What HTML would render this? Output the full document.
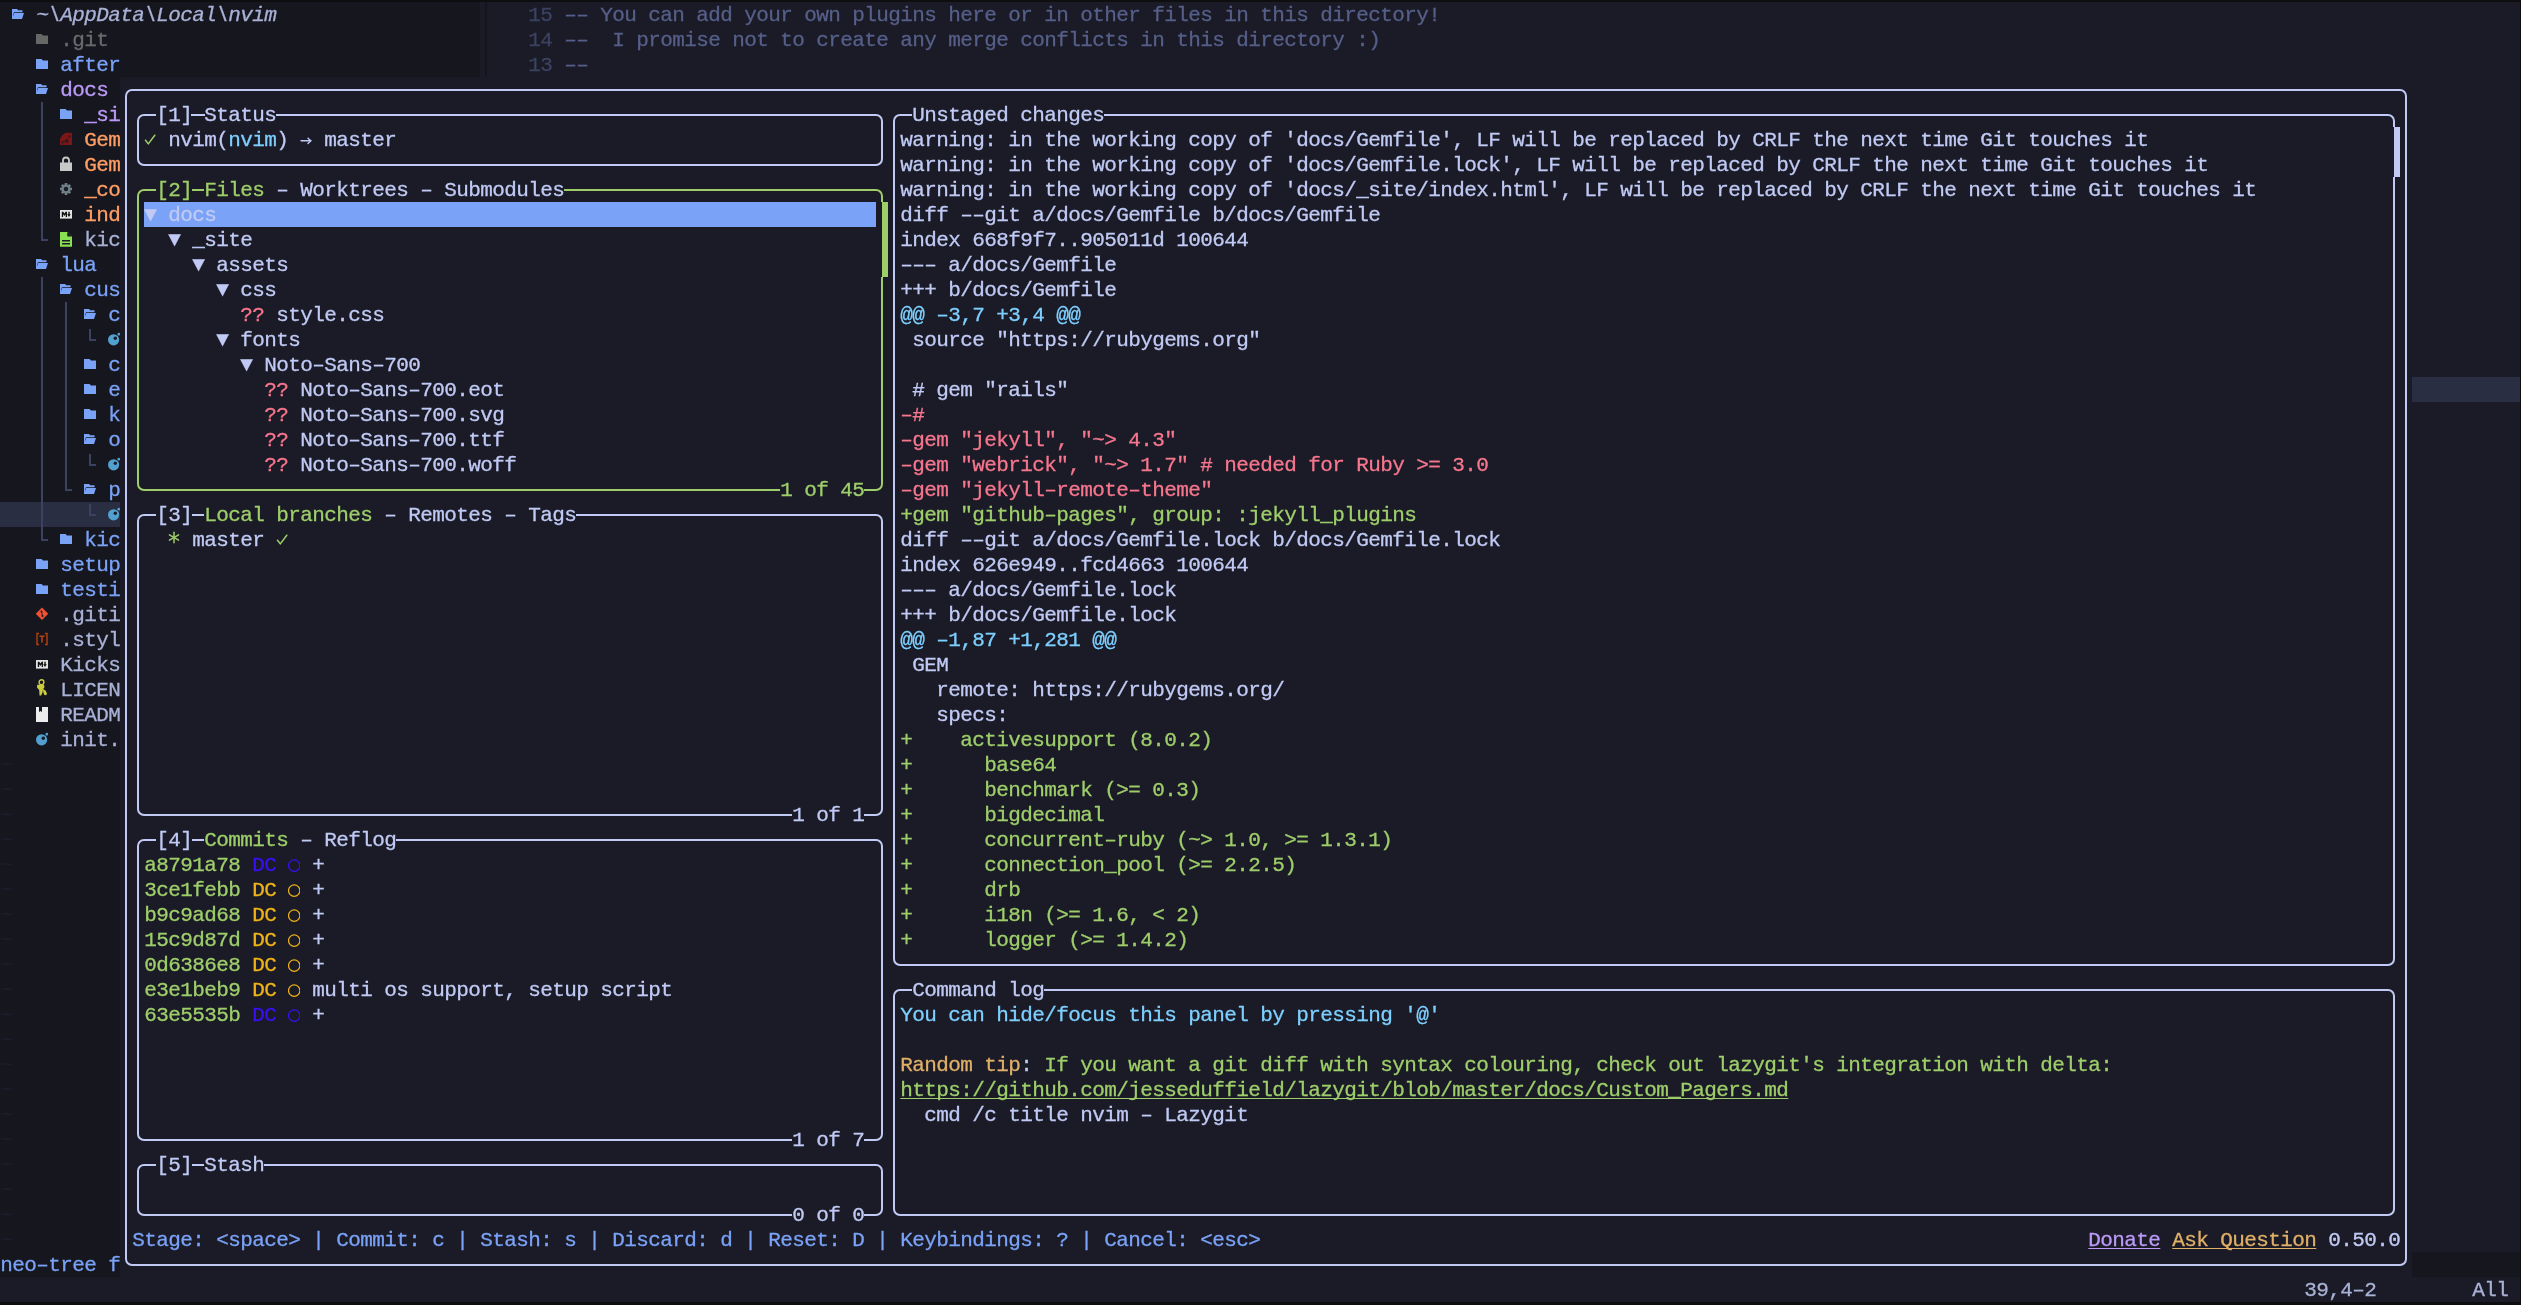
<!DOCTYPE html>
<html><head><meta charset="utf-8"><style>
html,body{margin:0;padding:0;}
body{width:2521px;height:1305px;overflow:hidden;background:#0e0e10;position:relative;}
.t{position:absolute;height:25px;line-height:25px;white-space:pre;font-family:"Liberation Mono",monospace;font-size:21px;letter-spacing:-0.6021px;-webkit-text-stroke:0.3px currentColor;}
#wrap{position:absolute;left:0;top:0;width:2521px;height:1305px;will-change:transform;}
.r{position:absolute;}
.b{position:absolute;box-sizing:border-box;border:2px solid;border-radius:7px;}
</style></head><body><div id="wrap">
<div class="r" style="left:0px;top:2px;width:2520px;height:1300px;background:#1a1b26;"></div>
<div class="r" style="left:0px;top:2px;width:480px;height:1250px;background:#16161e;"></div>
<div class="r" style="left:0px;top:1252px;width:2520px;height:25px;background:#16161e;"></div>
<div class="r" style="left:0px;top:502px;width:120px;height:25px;background:#292e42;"></div>
<div class="r" style="left:485px;top:2px;width:2px;height:1250px;background:#14141b;"></div>
<div class="t" style="left:36.3px;top:3px;color:#a9b1d6;font-style:italic;">~\AppData\Local\nvim</div>
<div class="t" style="left:60.3px;top:28px;color:#6b6b6b;">.git</div>
<div class="t" style="left:60.3px;top:53px;color:#7aa2f7;">after</div>
<div class="t" style="left:60.3px;top:78px;color:#bb9af7;">docs</div>
<div class="t" style="left:84.3px;top:103px;color:#bb9af7;">_si</div>
<div class="t" style="left:84.3px;top:128px;color:#ff9e64;">Gem</div>
<div class="t" style="left:84.3px;top:153px;color:#ff9e64;">Gem</div>
<div class="t" style="left:84.3px;top:178px;color:#ff9e64;">_co</div>
<div class="t" style="left:84.3px;top:203px;color:#ff9e64;">ind</div>
<div class="t" style="left:84.3px;top:228px;color:#a9b1d6;">kic</div>
<div class="t" style="left:60.3px;top:253px;color:#7aa2f7;">lua</div>
<div class="t" style="left:84.3px;top:278px;color:#7aa2f7;">cus</div>
<div class="t" style="left:108.3px;top:303px;color:#7aa2f7;">c</div>
<div class="t" style="left:108.3px;top:353px;color:#7aa2f7;">c</div>
<div class="t" style="left:108.3px;top:378px;color:#7aa2f7;">e</div>
<div class="t" style="left:108.3px;top:403px;color:#7aa2f7;">k</div>
<div class="t" style="left:108.3px;top:428px;color:#7aa2f7;">o</div>
<div class="t" style="left:108.3px;top:478px;color:#7aa2f7;">p</div>
<div class="t" style="left:84.3px;top:528px;color:#7aa2f7;">kic</div>
<div class="t" style="left:60.3px;top:553px;color:#7aa2f7;">setup</div>
<div class="t" style="left:60.3px;top:578px;color:#7aa2f7;">testi</div>
<div class="t" style="left:60.3px;top:603px;color:#a9b1d6;">.giti</div>
<div class="t" style="left:60.3px;top:628px;color:#a9b1d6;">.styl</div>
<div class="t" style="left:60.3px;top:653px;color:#a9b1d6;">Kicks</div>
<div class="t" style="left:60.3px;top:678px;color:#a9b1d6;">LICEN</div>
<div class="t" style="left:60.3px;top:703px;color:#a9b1d6;">READM</div>
<div class="t" style="left:60.3px;top:728px;color:#a9b1d6;">init.</div>
<svg class="r" style="left:12px;top:2px" width="12" height="25" viewBox="0 0 12 25"><path d="M0 7 H5 L6.2 8.2 H10.5 V10.2 H2 L1.2 12.5 V17 H0 Z" fill="#7aa2f7"/><path d="M2.2 11 H12 L10 17 H0 Z" fill="#7aa2f7"/></svg>
<svg class="r" style="left:36px;top:27px" width="12" height="25" viewBox="0 0 12 25"><path d="M0 7 H5.5 L7 8.5 H12 V17 H0 Z" fill="#676767"/></svg>
<svg class="r" style="left:36px;top:52px" width="12" height="25" viewBox="0 0 12 25"><path d="M0 7 H5.5 L7 8.5 H12 V17 H0 Z" fill="#7aa2f7"/></svg>
<svg class="r" style="left:36px;top:77px" width="12" height="25" viewBox="0 0 12 25"><path d="M0 7 H5 L6.2 8.2 H10.5 V10.2 H2 L1.2 12.5 V17 H0 Z" fill="#7aa2f7"/><path d="M2.2 11 H12 L10 17 H0 Z" fill="#7aa2f7"/></svg>
<svg class="r" style="left:60px;top:102px" width="12" height="25" viewBox="0 0 12 25"><path d="M0 7 H5.5 L7 8.5 H12 V17 H0 Z" fill="#7aa2f7"/></svg>
<svg class="r" style="left:60px;top:127px" width="12" height="25" viewBox="0 0 12 25"><path d="M5.8 5.8 H11.3 L12 6.6 V17.3 L11.3 18.1 H0.6 L0 17.3 V12 Q1.2 8.2 5.8 5.8 Z" fill="#7d1717"/><path d="M9.5 7.6 L8 10.3 L11 10.3 Z" fill="#1a1b26" opacity="0.85"/><path d="M1 14.7 L3.2 17.2 L3.8 14 Z" fill="#1a1b26" opacity="0.85"/><path d="M3.6 14.2 L7.8 11.2 L8.6 15.6 L7.4 16.2 Z" fill="#1a1b26" opacity="0.75"/></svg>
<svg class="r" style="left:60px;top:152px" width="12" height="25" viewBox="0 0 12 25"><path d="M3 11 V8.5 A3 3 0 0 1 9 8.5 V11" stroke="#c8c8c8" stroke-width="1.8" fill="none"/><rect x="0" y="10.5" width="12" height="8.5" fill="#c8c8c8"/></svg>
<svg class="r" style="left:60px;top:177px" width="12" height="25" viewBox="0 0 12 25"><circle cx="6" cy="12" r="4.6" fill="#6d8086"/><g stroke="#6d8086" stroke-width="2.6"><path d="M6 6 V18"/><path d="M0 12 H12"/><path d="M1.8 7.8 L10.2 16.2"/><path d="M10.2 7.8 L1.8 16.2"/></g><circle cx="6" cy="12" r="2.2" fill="#1a1b26"/></svg>
<svg class="r" style="left:60px;top:202px" width="12" height="25" viewBox="0 0 12 25"><rect x="0" y="8" width="12" height="8.6" fill="#e2e2e2"/><path d="M1.8 15 V9.8 H3.2 L4.4 11.6 L5.6 9.8 H7 V15 H5.7 V12.3 L4.4 14 L3.1 12.3 V15 Z" fill="#111"/><path d="M8.3 9.8 H9.7 V12.3 H10.8 L9 14.9 L7.2 12.3 H8.3 Z" fill="#111"/></svg>
<svg class="r" style="left:60px;top:227px" width="12" height="25" viewBox="0 0 12 25"><path d="M0 5 H7.5 L12 9.5 V19.7 H0 Z" fill="#89e051"/><path d="M7.5 5 V9.5 H12" fill="#1a1b26"/><path d="M7.5 5.6 V9 H11" fill="#1a1b26"/><rect x="2" y="13" width="8" height="1.5" fill="#1a1b26"/><rect x="2" y="16" width="8" height="1.5" fill="#1a1b26"/></svg>
<svg class="r" style="left:36px;top:252px" width="12" height="25" viewBox="0 0 12 25"><path d="M0 7 H5 L6.2 8.2 H10.5 V10.2 H2 L1.2 12.5 V17 H0 Z" fill="#7aa2f7"/><path d="M2.2 11 H12 L10 17 H0 Z" fill="#7aa2f7"/></svg>
<svg class="r" style="left:60px;top:277px" width="12" height="25" viewBox="0 0 12 25"><path d="M0 7 H5 L6.2 8.2 H10.5 V10.2 H2 L1.2 12.5 V17 H0 Z" fill="#7aa2f7"/><path d="M2.2 11 H12 L10 17 H0 Z" fill="#7aa2f7"/></svg>
<svg class="r" style="left:84px;top:302px" width="12" height="25" viewBox="0 0 12 25"><path d="M0 7 H5 L6.2 8.2 H10.5 V10.2 H2 L1.2 12.5 V17 H0 Z" fill="#7aa2f7"/><path d="M2.2 11 H12 L10 17 H0 Z" fill="#7aa2f7"/></svg>
<svg class="r" style="left:108px;top:327px" width="12" height="25" viewBox="0 0 12 25"><circle cx="5.6" cy="12.8" r="5.6" fill="#51a0cf"/><circle cx="7.3" cy="11.2" r="1.7" fill="#1a1b26"/><circle cx="10.8" cy="7.2" r="1.4" fill="#51a0cf"/></svg>
<svg class="r" style="left:84px;top:352px" width="12" height="25" viewBox="0 0 12 25"><path d="M0 7 H5.5 L7 8.5 H12 V17 H0 Z" fill="#7aa2f7"/></svg>
<svg class="r" style="left:84px;top:377px" width="12" height="25" viewBox="0 0 12 25"><path d="M0 7 H5.5 L7 8.5 H12 V17 H0 Z" fill="#7aa2f7"/></svg>
<svg class="r" style="left:84px;top:402px" width="12" height="25" viewBox="0 0 12 25"><path d="M0 7 H5.5 L7 8.5 H12 V17 H0 Z" fill="#7aa2f7"/></svg>
<svg class="r" style="left:84px;top:427px" width="12" height="25" viewBox="0 0 12 25"><path d="M0 7 H5 L6.2 8.2 H10.5 V10.2 H2 L1.2 12.5 V17 H0 Z" fill="#7aa2f7"/><path d="M2.2 11 H12 L10 17 H0 Z" fill="#7aa2f7"/></svg>
<svg class="r" style="left:108px;top:452px" width="12" height="25" viewBox="0 0 12 25"><circle cx="5.6" cy="12.8" r="5.6" fill="#51a0cf"/><circle cx="7.3" cy="11.2" r="1.7" fill="#1a1b26"/><circle cx="10.8" cy="7.2" r="1.4" fill="#51a0cf"/></svg>
<svg class="r" style="left:84px;top:477px" width="12" height="25" viewBox="0 0 12 25"><path d="M0 7 H5 L6.2 8.2 H10.5 V10.2 H2 L1.2 12.5 V17 H0 Z" fill="#7aa2f7"/><path d="M2.2 11 H12 L10 17 H0 Z" fill="#7aa2f7"/></svg>
<svg class="r" style="left:108px;top:502px" width="12" height="25" viewBox="0 0 12 25"><circle cx="5.6" cy="12.8" r="5.6" fill="#51a0cf"/><circle cx="7.3" cy="11.2" r="1.7" fill="#1a1b26"/><circle cx="10.8" cy="7.2" r="1.4" fill="#51a0cf"/></svg>
<svg class="r" style="left:60px;top:527px" width="12" height="25" viewBox="0 0 12 25"><path d="M0 7 H5.5 L7 8.5 H12 V17 H0 Z" fill="#7aa2f7"/></svg>
<svg class="r" style="left:36px;top:552px" width="12" height="25" viewBox="0 0 12 25"><path d="M0 7 H5.5 L7 8.5 H12 V17 H0 Z" fill="#7aa2f7"/></svg>
<svg class="r" style="left:36px;top:577px" width="12" height="25" viewBox="0 0 12 25"><path d="M0 7 H5.5 L7 8.5 H12 V17 H0 Z" fill="#7aa2f7"/></svg>
<svg class="r" style="left:36px;top:602px" width="12" height="25" viewBox="0 0 12 25"><path d="M6 5.5 L12.3 11.8 L6 18.1 L-0.3 11.8 Z" fill="#f05133"/><circle cx="5.5" cy="9.5" r="1" fill="#1a1b26"/><circle cx="6.5" cy="14" r="1" fill="#1a1b26"/><path d="M5.5 9.5 L6.5 14" stroke="#1a1b26" stroke-width="0.9"/></svg>
<svg class="r" style="left:36px;top:627px" width="12" height="25" viewBox="0 0 12 25"><path d="M3 6.5 H1 V17.5 H3 M9 6.5 H11 V17.5 H9" stroke="#b7410e" stroke-width="1.4" fill="none"/><path d="M3.5 9.2 H8.5 M6 9.2 V15.5" stroke="#b7410e" stroke-width="1.6" fill="none"/></svg>
<svg class="r" style="left:36px;top:652px" width="12" height="25" viewBox="0 0 12 25"><rect x="0" y="8" width="12" height="8.6" fill="#e2e2e2"/><path d="M1.8 15 V9.8 H3.2 L4.4 11.6 L5.6 9.8 H7 V15 H5.7 V12.3 L4.4 14 L3.1 12.3 V15 Z" fill="#111"/><path d="M8.3 9.8 H9.7 V12.3 H10.8 L9 14.9 L7.2 12.3 H8.3 Z" fill="#111"/></svg>
<svg class="r" style="left:36px;top:677px" width="12" height="25" viewBox="0 0 12 25"><circle cx="5.5" cy="5.2" r="2.4" stroke="#cbcb41" stroke-width="1.4" fill="none"/><path d="M1.2 7.8 H8 L8.5 10 L7 12.5 L6.5 15.5 L5.2 18.4 H3.5 L3.2 13 L1 10.5 Z" fill="#cbcb41"/><path d="M7 12 L9.5 13.5 L11 16.5 L10.2 18.3 L8.3 18 L7.2 15 Z" fill="#cbcb41"/></svg>
<svg class="r" style="left:36px;top:702px" width="12" height="25" viewBox="0 0 12 25"><path d="M0 5 H3 V10 L4.5 9 L6 10 V5 H12 V20 H0 Z" fill="#ededed"/></svg>
<svg class="r" style="left:36px;top:727px" width="12" height="25" viewBox="0 0 12 25"><circle cx="5.6" cy="12.8" r="5.6" fill="#51a0cf"/><circle cx="7.3" cy="11.2" r="1.7" fill="#1a1b26"/><circle cx="10.8" cy="7.2" r="1.4" fill="#51a0cf"/></svg>
<div class="r" style="left:41px;top:102px;width:1.5px;height:138.5px;background:#3b4261;"></div>
<div class="r" style="left:41px;top:239px;width:7px;height:1.5px;background:#3b4261;"></div>
<div class="r" style="left:41px;top:277px;width:1.5px;height:263.5px;background:#3b4261;"></div>
<div class="r" style="left:41px;top:539px;width:7px;height:1.5px;background:#3b4261;"></div>
<div class="r" style="left:65px;top:302px;width:1.5px;height:188.5px;background:#3b4261;"></div>
<div class="r" style="left:65px;top:489px;width:7px;height:1.5px;background:#3b4261;"></div>
<div class="r" style="left:89px;top:329px;width:1.5px;height:11.5px;background:#3b4261;"></div>
<div class="r" style="left:89px;top:339px;width:6.5px;height:1.5px;background:#3b4261;"></div>
<div class="r" style="left:89px;top:454px;width:1.5px;height:11.5px;background:#3b4261;"></div>
<div class="r" style="left:89px;top:464px;width:6.5px;height:1.5px;background:#3b4261;"></div>
<div class="r" style="left:89px;top:504px;width:1.5px;height:11.5px;background:#3b4261;"></div>
<div class="r" style="left:89px;top:514px;width:6.5px;height:1.5px;background:#3b4261;"></div>
<div class="t" style="left:0.3px;top:753px;color:#1e1f2e;">~</div>
<div class="t" style="left:0.3px;top:778px;color:#1e1f2e;">~</div>
<div class="t" style="left:0.3px;top:803px;color:#1e1f2e;">~</div>
<div class="t" style="left:0.3px;top:828px;color:#1e1f2e;">~</div>
<div class="t" style="left:0.3px;top:853px;color:#1e1f2e;">~</div>
<div class="t" style="left:0.3px;top:878px;color:#1e1f2e;">~</div>
<div class="t" style="left:0.3px;top:903px;color:#1e1f2e;">~</div>
<div class="t" style="left:0.3px;top:928px;color:#1e1f2e;">~</div>
<div class="t" style="left:0.3px;top:953px;color:#1e1f2e;">~</div>
<div class="t" style="left:0.3px;top:978px;color:#1e1f2e;">~</div>
<div class="t" style="left:0.3px;top:1003px;color:#1e1f2e;">~</div>
<div class="t" style="left:0.3px;top:1028px;color:#1e1f2e;">~</div>
<div class="t" style="left:0.3px;top:1053px;color:#1e1f2e;">~</div>
<div class="t" style="left:0.3px;top:1078px;color:#1e1f2e;">~</div>
<div class="t" style="left:0.3px;top:1103px;color:#1e1f2e;">~</div>
<div class="t" style="left:0.3px;top:1128px;color:#1e1f2e;">~</div>
<div class="t" style="left:0.3px;top:1153px;color:#1e1f2e;">~</div>
<div class="t" style="left:0.3px;top:1178px;color:#1e1f2e;">~</div>
<div class="t" style="left:0.3px;top:1203px;color:#1e1f2e;">~</div>
<div class="t" style="left:0.3px;top:1228px;color:#1e1f2e;">~</div>
<div class="t" style="left:0.3px;top:1253px;color:#7aa2f7;">neo–tree f</div>
<div class="t" style="left:528.3px;top:3px;color:#3b4261;">15</div>
<div class="t" style="left:564.3px;top:3px;color:#565f89;">–– You can add your own plugins here or in other files in this directory!</div>
<div class="t" style="left:528.3px;top:28px;color:#3b4261;">14</div>
<div class="t" style="left:564.3px;top:28px;color:#565f89;">––  I promise not to create any merge conflicts in this directory :)</div>
<div class="t" style="left:528.3px;top:53px;color:#3b4261;">13</div>
<div class="t" style="left:564.3px;top:53px;color:#565f89;">––</div>
<div class="r" style="left:2412px;top:377px;width:108px;height:25px;background:#292e42;"></div>
<div class="t" style="left:2304.3px;top:1278px;color:#a9b1d6;">39,4–2</div>
<div class="t" style="left:2472.3px;top:1278px;color:#a9b1d6;">All</div>
<div class="r" style="left:120px;top:77px;width:2292px;height:1200px;background:#1a1b26;"></div>
<div class="b" style="left:125px;top:89px;width:2282px;height:1177px;border-color:#c0caf5;"></div>
<div class="b" style="left:137px;top:114px;width:746px;height:52px;border-color:#c0caf5;"></div>
<div class="b" style="left:137px;top:189px;width:746px;height:302px;border-color:#9ece6a;"></div>
<div class="b" style="left:137px;top:514px;width:746px;height:302px;border-color:#c0caf5;"></div>
<div class="b" style="left:137px;top:839px;width:746px;height:302px;border-color:#c0caf5;"></div>
<div class="b" style="left:137px;top:1164px;width:746px;height:52px;border-color:#c0caf5;"></div>
<div class="b" style="left:893px;top:114px;width:1502px;height:852px;border-color:#c0caf5;"></div>
<div class="b" style="left:893px;top:989px;width:1502px;height:227px;border-color:#c0caf5;"></div>
<div class="t" style="left:156.3px;top:103px;color:#c0caf5;background:#1a1b26;">[1]</div>
<div class="t" style="left:204.3px;top:103px;color:#c0caf5;background:#1a1b26;">Status</div>
<div class="r" style="left:191px;top:114px;width:14px;height:2px;background:#c0caf5;"></div>
<div class="t" style="left:156.3px;top:178px;color:#9ece6a;background:#1a1b26;">[2]</div>
<div class="t" style="left:204.3px;top:178px;color:#9ece6a;background:#1a1b26;">Files</div>
<div class="t" style="left:264.3px;top:178px;color:#c0caf5;background:#1a1b26;"> – Worktrees – Submodules</div>
<div class="t" style="left:156.3px;top:503px;color:#c0caf5;background:#1a1b26;">[3]</div>
<div class="t" style="left:204.3px;top:503px;color:#9ece6a;background:#1a1b26;">Local branches</div>
<div class="t" style="left:372.3px;top:503px;color:#c0caf5;background:#1a1b26;"> – Remotes – Tags</div>
<div class="t" style="left:156.3px;top:828px;color:#c0caf5;background:#1a1b26;">[4]</div>
<div class="t" style="left:204.3px;top:828px;color:#9ece6a;background:#1a1b26;">Commits</div>
<div class="t" style="left:288.3px;top:828px;color:#c0caf5;background:#1a1b26;"> – Reflog</div>
<div class="t" style="left:156.3px;top:1153px;color:#c0caf5;background:#1a1b26;">[5]</div>
<div class="t" style="left:204.3px;top:1153px;color:#c0caf5;background:#1a1b26;">Stash</div>
<div class="t" style="left:912.3px;top:103px;color:#c0caf5;background:#1a1b26;">Unstaged changes</div>
<div class="t" style="left:912.3px;top:978px;color:#c0caf5;background:#1a1b26;">Command log</div>
<div class="t" style="left:780.3px;top:478px;color:#9ece6a;background:#1a1b26;">1 of 45</div>
<div class="t" style="left:792.3px;top:803px;color:#c0caf5;background:#1a1b26;">1 of 1</div>
<div class="t" style="left:792.3px;top:1128px;color:#c0caf5;background:#1a1b26;">1 of 7</div>
<div class="t" style="left:792.3px;top:1203px;color:#c0caf5;background:#1a1b26;">0 of 0</div>
<div class="r" style="left:881px;top:202px;width:1px;height:75px;background:#1a1b26;"></div>
<div class="r" style="left:882px;top:202px;width:6px;height:75px;background:#9ece6a;"></div>
<div class="r" style="left:2393px;top:127px;width:1px;height:50px;background:#1a1b26;"></div>
<div class="r" style="left:2394px;top:127px;width:6px;height:50px;background:#c0caf5;"></div>
<svg class="r" style="left:144px;top:127px" width="12" height="25" viewBox="0 0 12 25"><path d="M1.5 13.2 L4.3 16.9 L10.8 8.2" stroke="#9ece6a" stroke-width="1.5" fill="none" stroke-linecap="round" stroke-linejoin="round"/></svg>
<div class="t" style="left:156.3px;top:128px;color:#c0caf5;"> nvim(</div>
<div class="t" style="left:228.3px;top:128px;color:#7dcfff;">nvim</div>
<div class="t" style="left:276.3px;top:128px;color:#c0caf5;">)   master</div>
<svg class="r" style="left:300px;top:127px" width="12" height="25" viewBox="0 0 12 25"><g stroke="#c0caf5" stroke-width="1.4" fill="none" stroke-linecap="round" stroke-linejoin="round"><path d="M1 13.8 H10.8"/><path d="M8 11.2 L10.8 13.8 L8 16.4"/></g></svg>
<div class="r" style="left:144px;top:202px;width:732px;height:25px;background:#7aa2f7;"></div>
<div class="t" style="left:144.3px;top:203px;color:#c0caf5;">▼ docs</div>
<div class="t" style="left:168.3px;top:228px;color:#c0caf5;">▼ _site</div>
<div class="t" style="left:192.3px;top:253px;color:#c0caf5;">▼ assets</div>
<div class="t" style="left:216.3px;top:278px;color:#c0caf5;">▼ css</div>
<div class="t" style="left:240.3px;top:303px;color:#f7768e;">??</div>
<div class="t" style="left:264.3px;top:303px;color:#c0caf5;"> style.css</div>
<div class="t" style="left:216.3px;top:328px;color:#c0caf5;">▼ fonts</div>
<div class="t" style="left:240.3px;top:353px;color:#c0caf5;">▼ Noto–Sans–700</div>
<div class="t" style="left:264.3px;top:378px;color:#f7768e;">??</div>
<div class="t" style="left:288.3px;top:378px;color:#c0caf5;"> Noto–Sans–700.eot</div>
<div class="t" style="left:264.3px;top:403px;color:#f7768e;">??</div>
<div class="t" style="left:288.3px;top:403px;color:#c0caf5;"> Noto–Sans–700.svg</div>
<div class="t" style="left:264.3px;top:428px;color:#f7768e;">??</div>
<div class="t" style="left:288.3px;top:428px;color:#c0caf5;"> Noto–Sans–700.ttf</div>
<div class="t" style="left:264.3px;top:453px;color:#f7768e;">??</div>
<div class="t" style="left:288.3px;top:453px;color:#c0caf5;"> Noto–Sans–700.woff</div>
<div class="t" style="left:180.3px;top:528px;color:#c0caf5;"> master </div>
<svg class="r" style="left:168px;top:527px" width="12" height="25" viewBox="0 0 12 25"><g stroke="#9ece6a" stroke-width="1.5" stroke-linecap="round"><path d="M6 5.3 V15.8"/><path d="M1.4 7.8 L10.6 13.2"/><path d="M10.6 7.8 L1.4 13.2"/></g></svg>
<svg class="r" style="left:276px;top:527px" width="12" height="25" viewBox="0 0 12 25"><path d="M1.5 13.2 L4.3 16.9 L10.8 8.2" stroke="#9ece6a" stroke-width="1.5" fill="none" stroke-linecap="round" stroke-linejoin="round"/></svg>
<div class="t" style="left:144.3px;top:853px;color:#9ece6a;">a8791a78</div>
<div class="t" style="left:252.3px;top:853px;color:#3a0ff5;">DC</div>
<div class="t" style="left:312.3px;top:853px;color:#c0caf5;">+</div>
<svg class="r" style="left:288px;top:852px" width="12" height="25" viewBox="0 0 12 25"><circle cx="6.2" cy="13.6" r="5.7" stroke="#3a0ff5" stroke-width="1.2" fill="none"/></svg>
<div class="t" style="left:144.3px;top:878px;color:#9ece6a;">3ce1febb</div>
<div class="t" style="left:252.3px;top:878px;color:#f0b418;">DC</div>
<div class="t" style="left:312.3px;top:878px;color:#c0caf5;">+</div>
<svg class="r" style="left:288px;top:877px" width="12" height="25" viewBox="0 0 12 25"><circle cx="6.2" cy="13.6" r="5.7" stroke="#f0b418" stroke-width="1.2" fill="none"/></svg>
<div class="t" style="left:144.3px;top:903px;color:#9ece6a;">b9c9ad68</div>
<div class="t" style="left:252.3px;top:903px;color:#f0b418;">DC</div>
<div class="t" style="left:312.3px;top:903px;color:#c0caf5;">+</div>
<svg class="r" style="left:288px;top:902px" width="12" height="25" viewBox="0 0 12 25"><circle cx="6.2" cy="13.6" r="5.7" stroke="#f0b418" stroke-width="1.2" fill="none"/></svg>
<div class="t" style="left:144.3px;top:928px;color:#9ece6a;">15c9d87d</div>
<div class="t" style="left:252.3px;top:928px;color:#f0b418;">DC</div>
<div class="t" style="left:312.3px;top:928px;color:#c0caf5;">+</div>
<svg class="r" style="left:288px;top:927px" width="12" height="25" viewBox="0 0 12 25"><circle cx="6.2" cy="13.6" r="5.7" stroke="#f0b418" stroke-width="1.2" fill="none"/></svg>
<div class="t" style="left:144.3px;top:953px;color:#9ece6a;">0d6386e8</div>
<div class="t" style="left:252.3px;top:953px;color:#f0b418;">DC</div>
<div class="t" style="left:312.3px;top:953px;color:#c0caf5;">+</div>
<svg class="r" style="left:288px;top:952px" width="12" height="25" viewBox="0 0 12 25"><circle cx="6.2" cy="13.6" r="5.7" stroke="#f0b418" stroke-width="1.2" fill="none"/></svg>
<div class="t" style="left:144.3px;top:978px;color:#9ece6a;">e3e1beb9</div>
<div class="t" style="left:252.3px;top:978px;color:#f0b418;">DC</div>
<div class="t" style="left:312.3px;top:978px;color:#c0caf5;">multi os support, setup script</div>
<svg class="r" style="left:288px;top:977px" width="12" height="25" viewBox="0 0 12 25"><circle cx="6.2" cy="13.6" r="5.7" stroke="#f0b418" stroke-width="1.2" fill="none"/></svg>
<div class="t" style="left:144.3px;top:1003px;color:#9ece6a;">63e5535b</div>
<div class="t" style="left:252.3px;top:1003px;color:#3a0ff5;">DC</div>
<div class="t" style="left:312.3px;top:1003px;color:#c0caf5;">+</div>
<svg class="r" style="left:288px;top:1002px" width="12" height="25" viewBox="0 0 12 25"><circle cx="6.2" cy="13.6" r="5.7" stroke="#3a0ff5" stroke-width="1.2" fill="none"/></svg>
<div class="t" style="left:132.3px;top:1228px;color:#7aa2f7;">Stage: &lt;space&gt; | Commit: c | Stash: s | Discard: d | Reset: D | Keybindings: ? | Cancel: &lt;esc&gt;</div>
<div class="t" style="left:2088.3px;top:1228px;color:#bb9af7;text-decoration:underline;text-decoration-skip-ink:none;text-decoration-thickness:1.3px;text-underline-offset:2px;">Donate</div>
<div class="t" style="left:2172.3px;top:1228px;color:#e0af68;text-decoration:underline;text-decoration-skip-ink:none;text-decoration-thickness:1.3px;text-underline-offset:2px;">Ask Question</div>
<div class="t" style="left:2328.3px;top:1228px;color:#c0caf5;">0.50.0</div>
<div class="t" style="left:900.3px;top:128px;color:#c0caf5;">warning: in the working copy of 'docs/Gemfile', LF will be replaced by CRLF the next time Git touches it</div>
<div class="t" style="left:900.3px;top:153px;color:#c0caf5;">warning: in the working copy of 'docs/Gemfile.lock', LF will be replaced by CRLF the next time Git touches it</div>
<div class="t" style="left:900.3px;top:178px;color:#c0caf5;">warning: in the working copy of 'docs/_site/index.html', LF will be replaced by CRLF the next time Git touches it</div>
<div class="t" style="left:900.3px;top:203px;color:#c0caf5;">diff ––git a/docs/Gemfile b/docs/Gemfile</div>
<div class="t" style="left:900.3px;top:228px;color:#c0caf5;">index 668f9f7..905011d 100644</div>
<div class="t" style="left:900.3px;top:253px;color:#c0caf5;">––– a/docs/Gemfile</div>
<div class="t" style="left:900.3px;top:278px;color:#c0caf5;">+++ b/docs/Gemfile</div>
<div class="t" style="left:900.3px;top:303px;color:#7dcfff;">@@ –3,7 +3,4 @@</div>
<div class="t" style="left:900.3px;top:328px;color:#c0caf5;"> source "https://rubygems.org"</div>
<div class="t" style="left:900.3px;top:378px;color:#c0caf5;"> # gem "rails"</div>
<div class="t" style="left:900.3px;top:403px;color:#f7768e;">–#</div>
<div class="t" style="left:900.3px;top:428px;color:#f7768e;">–gem "jekyll", "~&gt; 4.3"</div>
<div class="t" style="left:900.3px;top:453px;color:#f7768e;">–gem "webrick", "~&gt; 1.7" # needed for Ruby &gt;= 3.0</div>
<div class="t" style="left:900.3px;top:478px;color:#f7768e;">–gem "jekyll–remote–theme"</div>
<div class="t" style="left:900.3px;top:503px;color:#9ece6a;">+gem "github–pages", group: :jekyll_plugins</div>
<div class="t" style="left:900.3px;top:528px;color:#c0caf5;">diff ––git a/docs/Gemfile.lock b/docs/Gemfile.lock</div>
<div class="t" style="left:900.3px;top:553px;color:#c0caf5;">index 626e949..fcd4663 100644</div>
<div class="t" style="left:900.3px;top:578px;color:#c0caf5;">––– a/docs/Gemfile.lock</div>
<div class="t" style="left:900.3px;top:603px;color:#c0caf5;">+++ b/docs/Gemfile.lock</div>
<div class="t" style="left:900.3px;top:628px;color:#7dcfff;">@@ –1,87 +1,281 @@</div>
<div class="t" style="left:900.3px;top:653px;color:#c0caf5;"> GEM</div>
<div class="t" style="left:900.3px;top:678px;color:#c0caf5;">   remote: https://rubygems.org/</div>
<div class="t" style="left:900.3px;top:703px;color:#c0caf5;">   specs:</div>
<div class="t" style="left:900.3px;top:728px;color:#9ece6a;">+    activesupport (8.0.2)</div>
<div class="t" style="left:900.3px;top:753px;color:#9ece6a;">+      base64</div>
<div class="t" style="left:900.3px;top:778px;color:#9ece6a;">+      benchmark (&gt;= 0.3)</div>
<div class="t" style="left:900.3px;top:803px;color:#9ece6a;">+      bigdecimal</div>
<div class="t" style="left:900.3px;top:828px;color:#9ece6a;">+      concurrent–ruby (~&gt; 1.0, &gt;= 1.3.1)</div>
<div class="t" style="left:900.3px;top:853px;color:#9ece6a;">+      connection_pool (&gt;= 2.2.5)</div>
<div class="t" style="left:900.3px;top:878px;color:#9ece6a;">+      drb</div>
<div class="t" style="left:900.3px;top:903px;color:#9ece6a;">+      i18n (&gt;= 1.6, &lt; 2)</div>
<div class="t" style="left:900.3px;top:928px;color:#9ece6a;">+      logger (&gt;= 1.4.2)</div>
<div class="t" style="left:900.3px;top:1003px;color:#7dcfff;">You can hide/focus this panel by pressing '@'</div>
<div class="t" style="left:900.3px;top:1053px;color:#e0af68;">Random tip</div>
<div class="t" style="left:1020.3px;top:1053px;color:#c0caf5;">:</div>
<div class="t" style="left:1032.3px;top:1053px;color:#9ece6a;"> If you want a git diff with syntax colouring, check out lazygit's integration with delta:</div>
<div class="t" style="left:900.3px;top:1078px;color:#9ece6a;text-decoration:underline;text-decoration-skip-ink:none;text-decoration-thickness:1.3px;text-underline-offset:2px;">https://github.com/jesseduffield/lazygit/blob/master/docs/Custom_Pagers.md</div>
<div class="t" style="left:900.3px;top:1103px;color:#c0caf5;">  cmd /c title nvim – Lazygit</div>
</div></body></html>
